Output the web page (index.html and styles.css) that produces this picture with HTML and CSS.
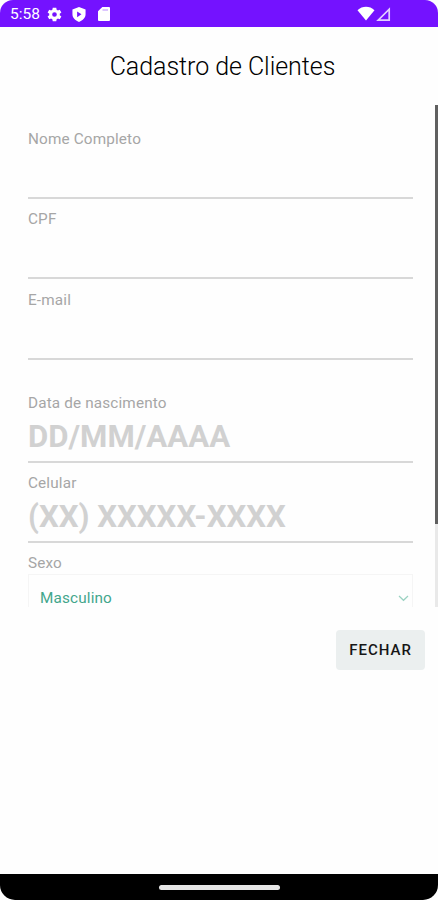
FILE: index.html
```html
<!DOCTYPE html>
<html lang="pt-BR">
<head>
<meta charset="utf-8">
<title>Cadastro de Clientes</title>
<link rel="stylesheet" href="styles.css">
</head>
<body>
<div class="phone">
  <header class="status">
    <span class="clock">5:58</span>
    <svg class="gear" width="17" height="17" viewBox="0 0 24 24"><path fill="#fff" fill-rule="evenodd" d="M19.400 13a7.500 7.500 0 0 0 0-2l2.300-1.700-2.300-4-2.700 1.100a7.500 7.500 0 0 0-1.700-1L14.500 2.500h-5L9 5.400a7.500 7.500 0 0 0-1.700 1L4.600 5.300l-2.300 4L4.600 11a7.500 7.500 0 0 0 0 2l-2.300 1.700 2.300 4 2.700-1.100a7.500 7.500 0 0 0 1.700 1l.5 2.900h5l.5-2.900a7.500 7.500 0 0 0 1.700-1l2.700 1.100 2.300-4zM12 15.300a3.300 3.300 0 1 1 0-6.600 3.300 3.300 0 0 1 0 6.600z"/></svg>
    <svg class="shield" width="14" height="15" viewBox="0 0 14 16"><path fill="#fff" fill-rule="evenodd" d="M7 0l7 2.600v5.200c0 3.600-2.800 6.700-7 8.200-4.200-1.500-7-4.600-7-8.200V2.600zM5 4.700v6.200L9.600 7.800z"/></svg>
    <svg class="card" width="12" height="14" viewBox="0 0 12 14"><path fill="#fff" d="M4.300 0H11a1 1 0 0 1 1 1v12a1 1 0 0 1-1 1H1a1 1 0 0 1-1-1V4.300z"/><path stroke="#b98cff" stroke-width="1" d="M4.500 3h5.500"/></svg>
    <svg class="wifi" width="18" height="15" viewBox="0 0 18 15"><path fill="#fff" d="M9 14.500L.5 4.200C5.300-.3 12.700-.3 17.500 4.200z"/></svg>
    <svg class="signal" width="15" height="15" viewBox="0 0 15 15"><path fill="none" stroke="#e2cfff" stroke-width="1.700" d="M13.200 2.200v11H2.200z"/></svg>
  </header>
  <h1 class="title">Cadastro de Clientes</h1>
  <main class="scroller">
    <form class="form">
      <div class="field"><span class="label">Nome Completo</span><span class="value"></span></div>
      <div class="field"><span class="label">CPF</span><span class="value"></span></div>
      <div class="field last"><span class="label">E-mail</span><span class="value"></span></div>
      <div class="field"><span class="label">Data de nascimento</span><span class="value">DD/MM/AAAA</span></div>
      <div class="field"><span class="label">Celular</span><span class="value">(XX) XXXXX-XXXX</span></div>
      <div class="field"><span class="label">Sexo</span>
        <div class="select"><span>Masculino</span><svg width="11" height="7" viewBox="0 0 11 7"><path fill="none" stroke="#9bd2c2" stroke-width="1.200" d="M1 1l4.500 4.300L10 1"/></svg></div>
      </div>
    </form>
    <div class="track"><div class="thumb"></div></div>
  </main>
  <footer class="actions"><span class="close">FECHAR</span></footer>
  <nav class="navbar"><span class="handle"></span></nav>
</div>
</body>
</html>
```
FILE: styles.css
```css
body { margin: 0; background: #fff; font-family: Roboto, sans-serif; }
.phone { width: 438px; height: 900px; display: flex; flex-direction: column; overflow: hidden; background: #fefefe; }
.status { box-sizing: border-box; height: 27px; flex: none; display: flex; align-items: center; padding: 1px 47px 0 10px; background: #7412ff; border-radius: 13px 13px 0 0; }
.clock { width: 36px; color: #fff; font-size: 15.500px; line-height: 20px; white-space: nowrap; }
.shield { margin-left: 9px; }
.card { margin-left: 12px; }
.wifi { margin-left: auto; margin-top: -2px; }
.signal { margin-left: 1px; }
.title { flex: none; margin: 0; height: 78px; line-height: 79px; padding-left: 7px; text-align: center; font-size: 25px; font-weight: 300; letter-spacing: -0.050px; color: #000; }
.scroller { flex: none; height: 502px; display: flex; justify-content: space-between; overflow: hidden; }
.form { width: 385px; padding: 24px 0 0 28px; }
.field { display: flex; flex-direction: column; height: 80.300px; }
.field.last { height: 103px; }
.label { height: 20px; line-height: 21px; font-size: 15.300px; letter-spacing: 0.150px; color: #a6a6a6; white-space: nowrap; }
.value { height: 48px; line-height: 48px; border-bottom: 2px solid #d8d8d8; font-size: 31.200px; font-weight: 700; color: #d1d1d1; white-space: nowrap; }
.select { box-sizing: border-box; height: 48px; margin-top: 1px; padding: 0 3px 0 11px; display: flex; align-items: center; justify-content: space-between; border: 1px solid #f5f5f5; color: #43a68c; font-size: 15.300px; letter-spacing: 0.150px; }
.track { width: 3px; height: 502px; background: #e9e9e9; }
.thumb { height: 419px; background: #606060; }
.actions { flex: 1; display: flex; justify-content: flex-end; align-items: flex-start; padding: 23px 13px 0 0; }
.close { width: 89px; height: 40px; line-height: 40px; border-radius: 4px; background: #ebefef; text-align: center; font-size: 15px; font-weight: 500; letter-spacing: 1px; color: #161616; }
.navbar { flex: none; height: 26px; display: flex; align-items: center; justify-content: center; background: #000; border-radius: 0 0 15px 15px; }
.handle { width: 121px; height: 5px; border-radius: 3px; background: #e6e6e6; }
```
